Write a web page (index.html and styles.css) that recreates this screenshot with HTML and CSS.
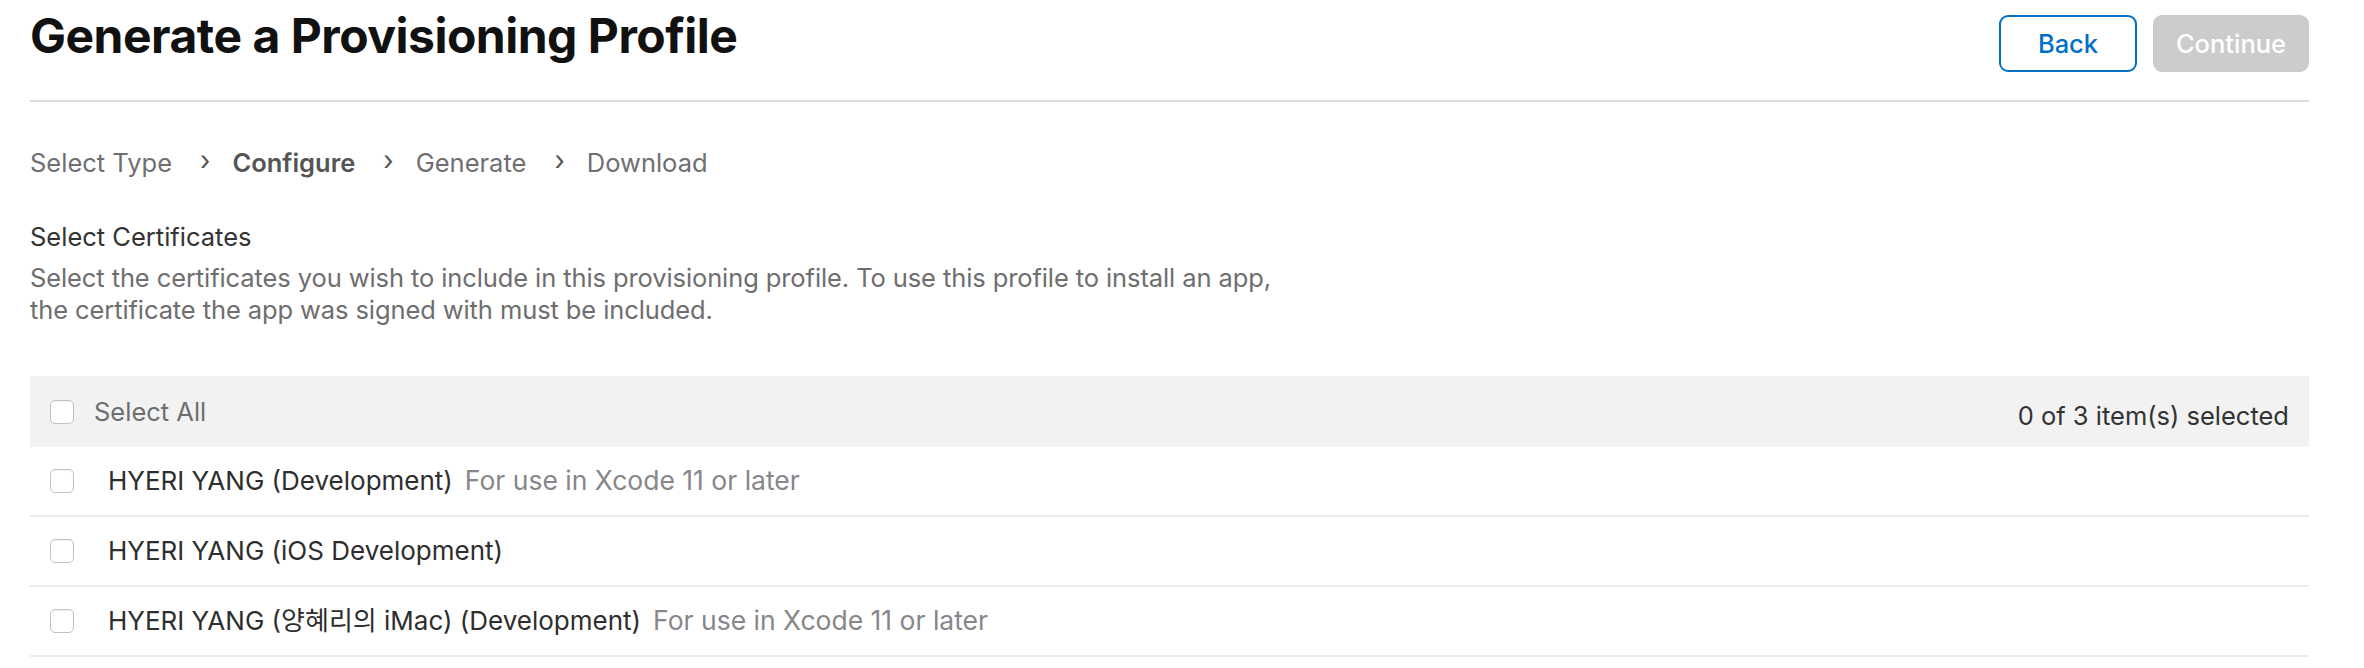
FILE: index.html
```html
<!DOCTYPE html>
<html>
<head>
<meta charset="utf-8">
<link rel="stylesheet" href="styles.css">
</head>
<body>
<div class="page">
  <header class="header">
    <h1 class="title">Generate a Provisioning Profile</h1>
    <div class="actions">
      <button class="btn btn-back">Back</button>
      <button class="btn btn-continue">Continue</button>
    </div>
  </header>

  <nav class="steps">
    <span class="step">Select Type</span>
    <span class="chev">›</span>
    <span class="step current">Configure</span>
    <span class="chev">›</span>
    <span class="step">Generate</span>
    <span class="chev">›</span>
    <span class="step">Download</span>
  </nav>

  <section class="intro">
    <h2 class="section-title">Select Certificates</h2>
    <p class="section-desc">Select the certificates you wish to include in this provisioning profile. To use this profile to install an app,<br>the certificate the app was signed with must be included.</p>
  </section>

  <div class="list">
    <div class="list-head">
      <label class="head-left"><span class="checkbox"></span><span class="select-all">Select All</span></label>
      <span class="count">0 of 3 item(s) selected</span>
    </div>
    <div class="row"><span class="checkbox"></span><span class="name">HYERI YANG (Development)</span><span class="note">For use in Xcode 11 or later</span></div>
    <div class="row"><span class="checkbox"></span><span class="name">HYERI YANG (iOS Development)</span></div>
    <div class="row"><span class="checkbox"></span><span class="name">HYERI YANG (양혜리의 iMac) (Development)</span><span class="note">For use in Xcode 11 or later</span></div>
  </div>
</div>
</body>
</html>
```

FILE: styles.css
```css
* { box-sizing: border-box; }
html, body { margin: 0; padding: 0; background: #fff; }
body {
  font-family: Inter, "Noto Sans", "Noto Sans CJK KR", sans-serif;
  font-size: 25.5px;
  line-height: 31.5px;
  color: #333;
}
.page { padding: 0 55px 0 30px; }

.header {
  display: flex;
  justify-content: space-between;
  align-items: flex-start;
  padding: 8px 0 28px;
  border-bottom: 2px solid #dcdcdc;
}
.title {
  margin: 0;
  font-size: 48px;
  line-height: 55px;
  font-weight: 700;
  letter-spacing: -0.5px;
  color: #111;
}
.actions { display: flex; gap: 16px; margin-top: 7px; }
.btn {
  height: 57px;
  font-family: inherit;
  font-size: 25.5px;
  font-weight: 500;
  border-radius: 9px;
  padding: 0;
  cursor: pointer;
}
.btn-back {
  width: 138px;
  background: #fff;
  border: 2px solid #0070c9;
  color: #0070c9;
}
.btn-continue {
  width: 156px;
  background: #cccccc;
  border: 2px solid #cccccc;
  color: #fff;
}

.steps {
  display: flex;
  align-items: center;
  margin-top: 45px;
  color: #6e6e73;
}
.step.current { font-weight: 600; color: #555; }
.chev {
  display: inline-block;
  margin: 0 22px 0 28px;
  color: #555;
  font-size: 27px;
  transform: translateY(-2px);
}

.intro { margin-top: 42px; }
.section-title {
  margin: 0 0 10px;
  font-size: 25.5px;
  line-height: 31.5px;
  font-weight: 400;
  color: #333;
}
.section-desc { margin: 0; color: #6e6e6e; letter-spacing: -0.1px; }

.list { margin-top: 51px; }
.list-head {
  display: flex;
  justify-content: space-between;
  align-items: center;
  height: 71px;
  padding: 0 20px;
  background: #f2f2f2;
}
.head-left { display: flex; align-items: center; }
.select-all { margin-left: 20px; color: #6e6e6e; }
.count { color: #333; padding-top: 8px; font-size: 25.5px; }

.checkbox {
  display: inline-block;
  width: 24px;
  height: 24px;
  border: 1.5px solid #c2c2c2;
  border-radius: 5px;
  background: #fff;
  box-shadow: inset 0 1px 1px rgba(0,0,0,0.06);
  flex: none;
}
.row {
  display: flex;
  align-items: center;
  height: 70px;
  padding: 0 20px;
  border-bottom: 2px solid #ebebeb;
  font-size: 26px;
}
.row .name { margin-left: 34px; color: #2e2e2e; }
.row .note { margin-left: 12px; color: #86868b; font-size: 26.5px; }
```
